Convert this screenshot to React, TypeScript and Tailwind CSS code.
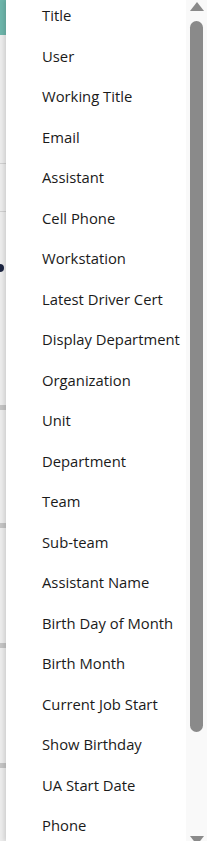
const FIELDS = [
  "Title",
  "User",
  "Working Title",
  "Email",
  "Assistant",
  "Cell Phone",
  "Workstation",
  "Latest Driver Cert",
  "Display Department",
  "Organization",
  "Unit",
  "Department",
  "Team",
  "Sub-team",
  "Assistant Name",
  "Birth Day of Month",
  "Birth Month",
  "Current Job Start",
  "Show Birthday",
  "UA Start Date",
  "Phone",
];

function BackdropStrip() {
  // the page peeking out behind the dropdown
  return (
    <div className="flex h-full w-[6px] shrink-0 flex-col overflow-hidden bg-[#ececec]">
      <div className="h-[35px] shrink-0 bg-[#6db5aa]" />
      <div className="mt-[128px] h-px shrink-0 bg-[#d0d0d0]" />
      <div className="mt-[47px] h-px shrink-0 bg-[#d0d0d0]" />
      <div className="ml-[-4px] mt-[52px] h-[8px] w-[8px] shrink-0 rounded-full bg-[#1c2541]" />
      <div className="mt-[133px] h-[5px] shrink-0 bg-[#c4c4c4]" />
      <div className="mt-[113px] h-[5px] shrink-0 bg-[#c4c4c4]" />
      <div className="mt-[115px] h-[5px] shrink-0 bg-[#c4c4c4]" />
      <div className="mt-[115px] h-[5px] shrink-0 bg-[#c4c4c4]" />
    </div>
  );
}

export default function App() {
  return (
    <div className="flex h-[841px] w-[207px] overflow-hidden bg-white font-['Open_Sans',sans-serif]">
      <BackdropStrip />
      <div className="flex flex-1 bg-white shadow-[-2px_0_4px_rgba(0,0,0,0.12)]">
        <ul className="mt-[-5px] flex-1 pl-[36px]">
          {FIELDS.map((f) => (
            <li
              key={f}
              className="flex h-[40.5px] items-center whitespace-nowrap text-[14.8px] text-[#1a1a1a]"
            >
              {f}
            </li>
          ))}
        </ul>
        <div className="flex w-[21px] shrink-0 flex-col items-center bg-[#f9f9f9]">
          <div className="mt-[2px] h-0 w-0 border-x-[7px] border-b-[9px] border-x-transparent border-b-[#8a8a8a]" />
          <div className="mt-[10px] h-[711px] w-[13px] rounded-full bg-[#8a8a8a]" />
          <div className="mt-auto mb-[-4px] h-0 w-0 border-x-[7px] border-t-[9px] border-x-transparent border-t-[#8a8a8a]" />
        </div>
      </div>
    </div>
  );
}
